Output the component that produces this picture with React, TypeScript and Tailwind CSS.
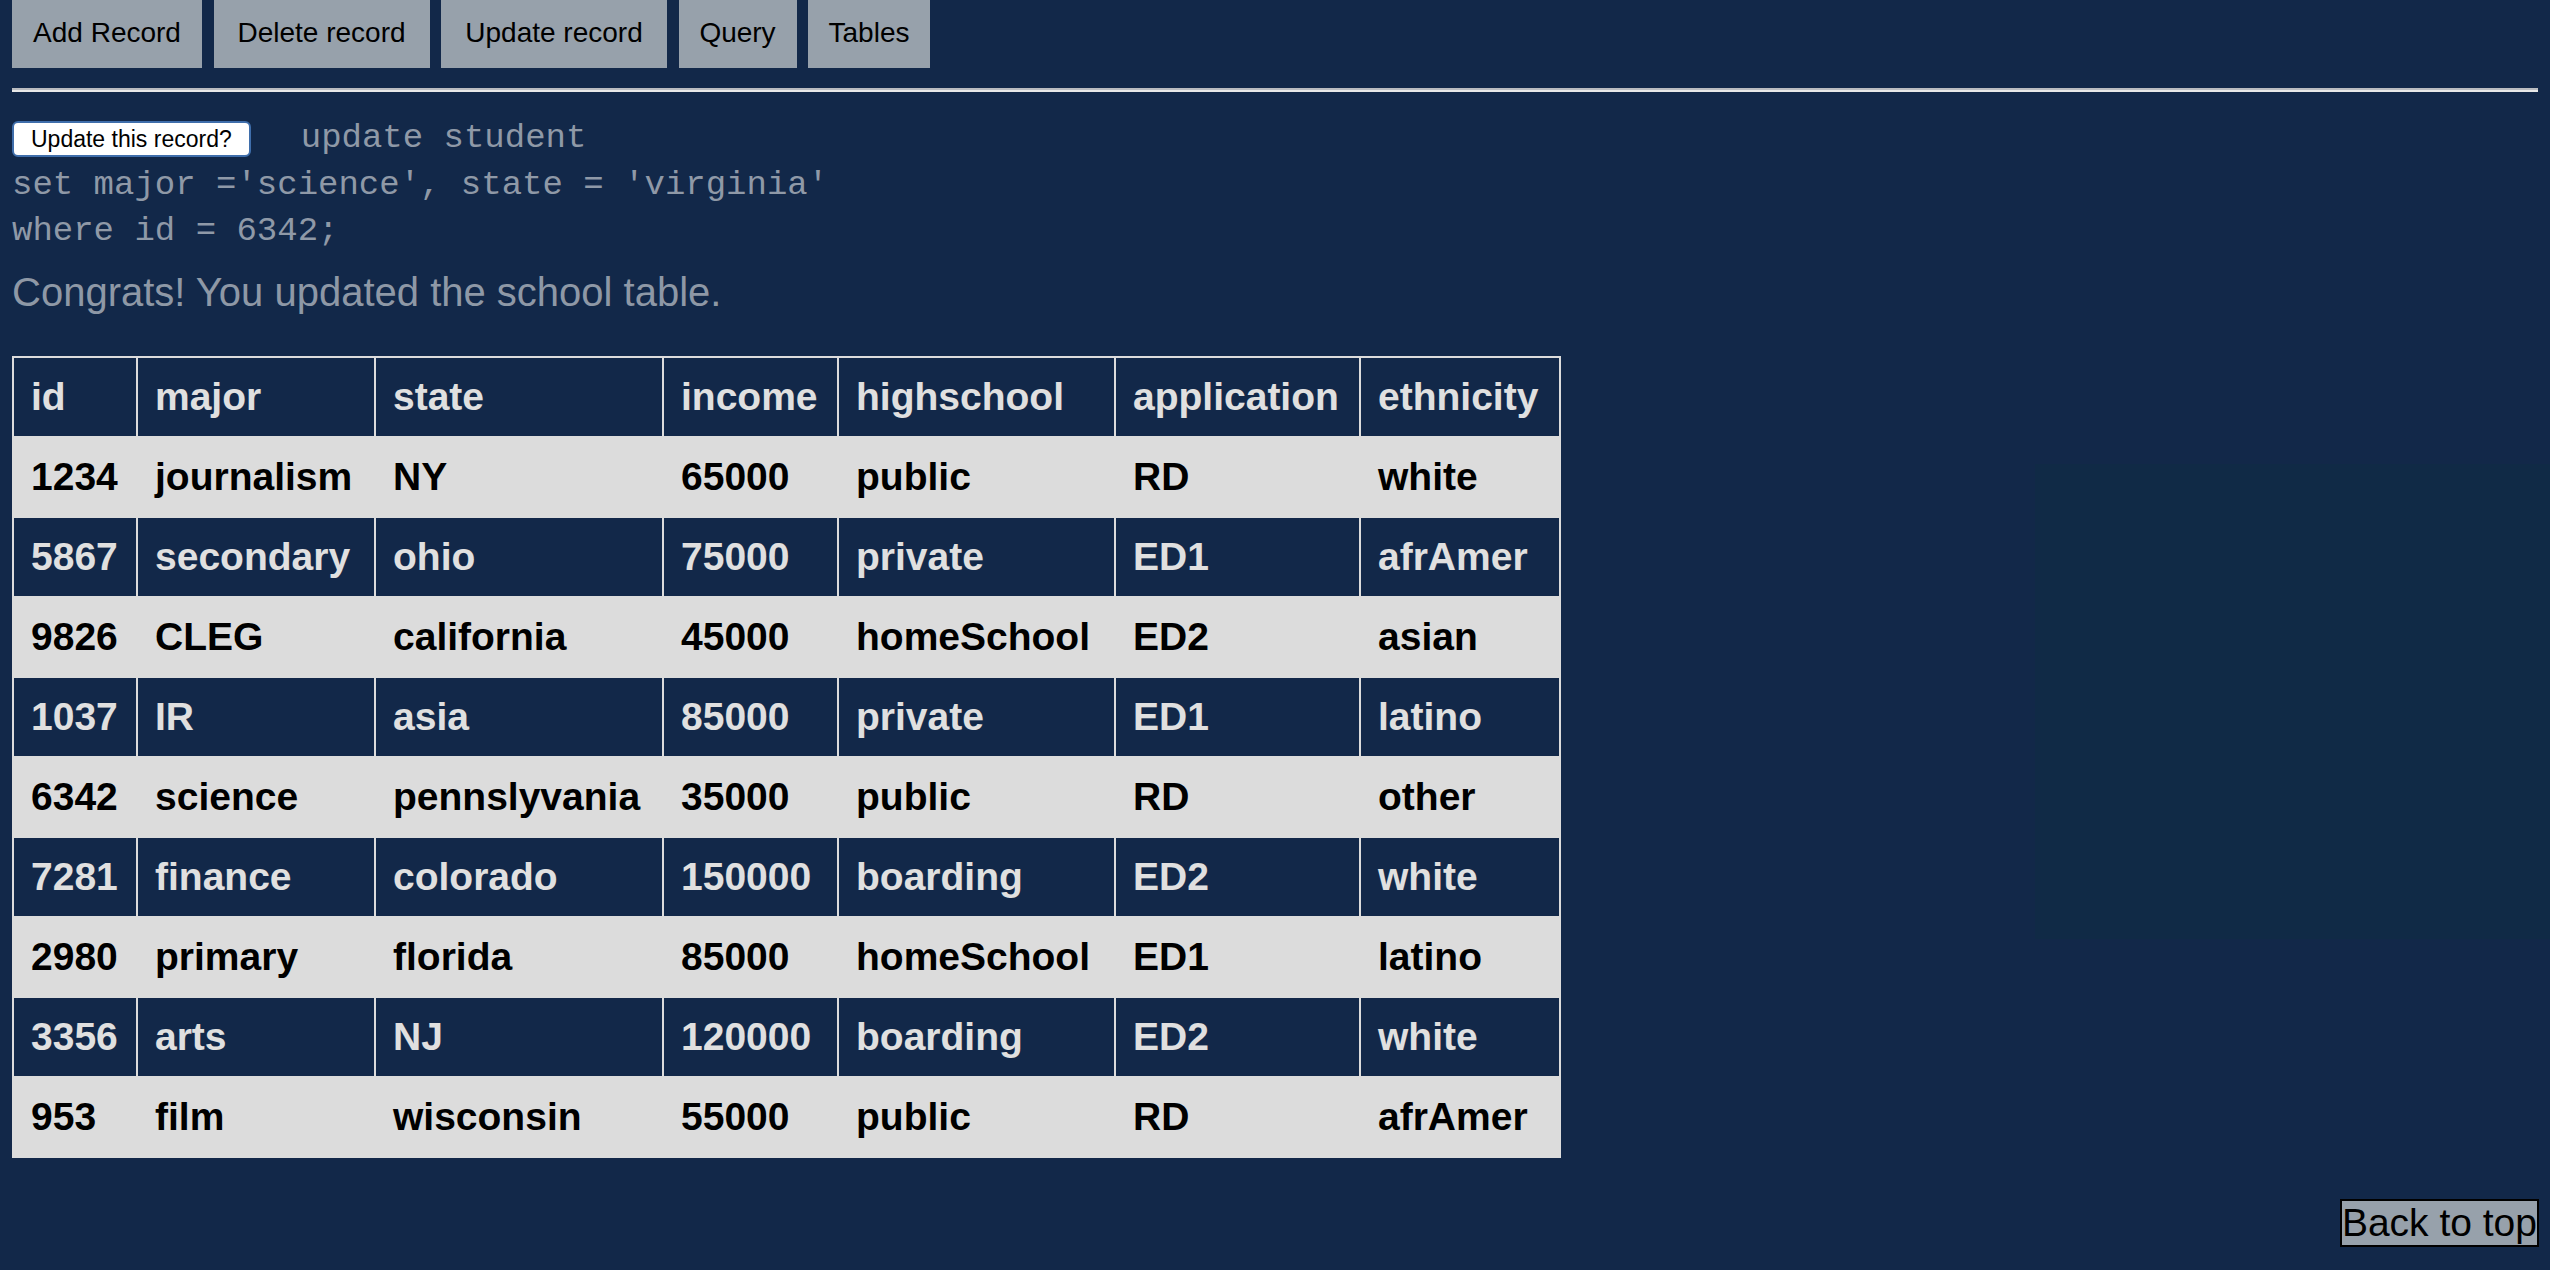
import React from "react";

const navButtons: { label: string; w: string }[] = [
  { label: "Add Record", w: "w-[190px]" },
  { label: "Delete record", w: "w-[216px]" },
  { label: "Update record", w: "w-[226px]" },
  { label: "Query", w: "w-[118px]" },
  { label: "Tables", w: "w-[122px]" },
];

const headers = ["id", "major", "state", "income", "highschool", "application", "ethnicity"];

const rows: string[][] = [
  ["1234", "journalism", "NY", "65000", "public", "RD", "white"],
  ["5867", "secondary", "ohio", "75000", "private", "ED1", "afrAmer"],
  ["9826", "CLEG", "california", "45000", "homeSchool", "ED2", "asian"],
  ["1037", "IR", "asia", "85000", "private", "ED1", "latino"],
  ["6342", "science", "pennslyvania", "35000", "public", "RD", "other"],
  ["7281", "finance", "colorado", "150000", "boarding", "ED2", "white"],
  ["2980", "primary", "florida", "85000", "homeSchool", "ED1", "latino"],
  ["3356", "arts", "NJ", "120000", "boarding", "ED2", "white"],
  ["953", "film", "wisconsin", "55000", "public", "RD", "afrAmer"],
];

export default function App() {
  return (
    <div
      className="relative min-h-screen overflow-hidden bg-[#122849] px-[12px]"
      style={{ fontFamily: '"Liberation Sans", Arial, sans-serif' }}
    >
      {/* faint rendering block at right */}
      <div className="pointer-events-none absolute left-[2035px] top-[464px] h-[475px] w-[515px] bg-[#102a46]" />

      <nav className="relative flex gap-[11.5px]">
        {navButtons.map((b) => (
          <button
            key={b.label}
            className={`${b.w} h-[68px] bg-[#97a1ab] pb-[3px] text-center text-[28px] leading-[32px] text-black`}
          >
            {b.label}
          </button>
        ))}
      </nav>

      <div className="relative mt-[20px] h-[4px] border-t-[2px] border-b-[2px] border-t-[#b9bcc0] border-b-[#e8e8e8]" />

      <div
        className="relative mt-[23px] whitespace-pre text-[34px] leading-[46.5px] text-[#8f99a7]"
        style={{ fontFamily: '"Liberation Mono", "Courier New", monospace' }}
      >
        <button
          className="mr-[50px] inline-block rounded-[6px] border-[2px] border-[#3f6eab] bg-white px-[17px] py-[3px] align-baseline text-[23px] leading-[26px] text-black"
          style={{ fontFamily: '"Liberation Sans", Arial, sans-serif' }}
        >
          Update this record?
        </button>
        {"update student\nset major ='science', state = 'virginia'\nwhere id = 6342;"}
      </div>

      <p className="relative mt-[15px] text-[40px] leading-[44px] text-[#8e98a6]">
        Congrats! You updated the school table.
      </p>

      <table className="relative mt-[42px] w-[1549px] table-fixed border-collapse border-[2px] border-[#dcdcdc] text-[39px] font-bold leading-[46px]">
        <colgroup>
          <col className="w-[124px]" />
          <col className="w-[238px]" />
          <col className="w-[288px]" />
          <col className="w-[175px]" />
          <col className="w-[277px]" />
          <col className="w-[245px]" />
          <col className="w-[200px]" />
        </colgroup>
        <thead>
          <tr className="bg-[#122849] text-[#e0e0e0]">
            {headers.map((h) => (
              <th
                key={h}
                className="overflow-hidden whitespace-nowrap border-[2px] border-[#dcdcdc] px-[17px] py-[16px] text-left font-bold"
              >
                {h}
              </th>
            ))}
          </tr>
        </thead>
        <tbody>
          {rows.map((r, i) => (
            <tr
              key={r[0] + i}
              className={i % 2 === 0 ? "bg-[#dcdcdc] text-black" : "bg-[#122849] text-[#e0e0e0]"}
            >
              {r.map((c, j) => (
                <td
                  key={j}
                  className="overflow-hidden whitespace-nowrap border-[2px] border-[#dcdcdc] px-[17px] py-[16px] text-left"
                >
                  {c}
                </td>
              ))}
            </tr>
          ))}
        </tbody>
      </table>

      <button className="fixed bottom-[23px] right-[11px] border-[2px] border-black bg-[#97a1ab] px-0 text-[39px] leading-[44px] text-black">
        Back to top
      </button>
    </div>
  );
}
